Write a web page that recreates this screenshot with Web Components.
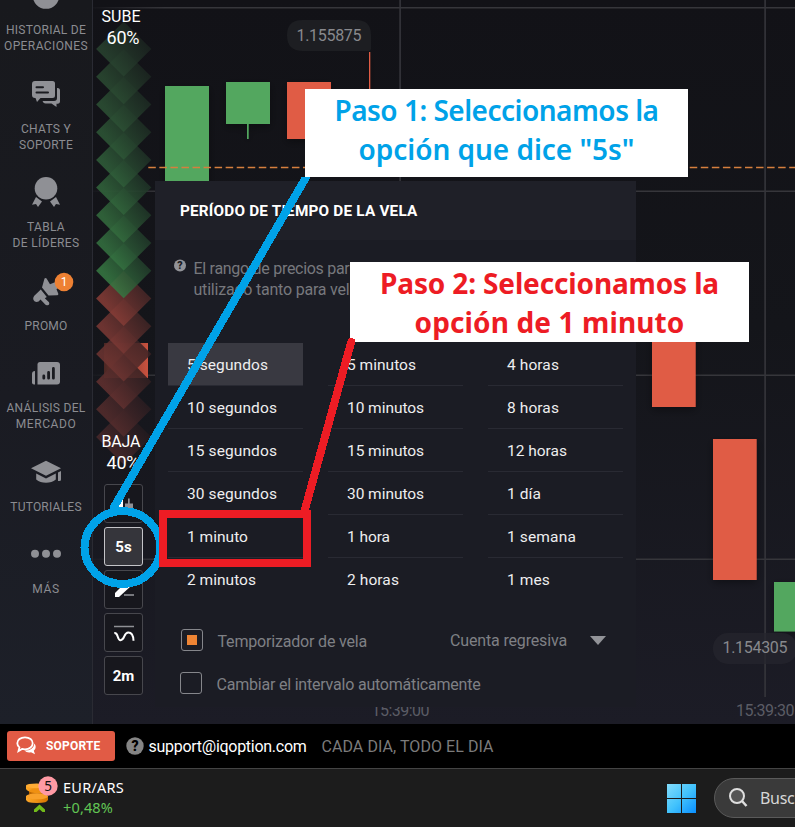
<!DOCTYPE html>
<html lang="es">
<head>
<meta charset="utf-8">
<title>Período de tiempo de la vela</title>
<style>
html,body{margin:0;padding:0}
body{width:795px;height:827px;overflow:hidden;background:#000;font-family:Roboto,"Liberation Sans",sans-serif}
</style>
</head>
<body>
<trade-app></trade-app>
<script>
function define(name, html, setup){
  customElements.define(name, class extends HTMLElement{
    connectedCallback(){
      if(this.shadowRoot) return;
      const t=document.createElement('template');
      t.innerHTML=html;
      this.attachShadow({mode:'open'}).append(t.content.cloneNode(true));
      if(setup) setup.call(this,this.shadowRoot);
    }
  });
}

/* Single-line text whose letter spacing is set so that it spans the width "w". */
define('fit-text', `<style>:host{display:inline-block;white-space:pre}</style><slot></slot>`, function(){
  const w=+this.getAttribute('w');
  if(!w) return;
  const n=this.textContent.length, nat=this.getBoundingClientRect().width;
  if(nat) this.style.letterSpacing=((w-nat)/n).toFixed(3)+'px';
});

define('side-item', `<style>
:host{display:flex;flex-direction:column;align-items:center;font-size:12px;line-height:16px;color:#8b8c91;text-align:center;flex:none}
::slotted(svg){display:block;width:46px;height:46px;overflow:visible}
::slotted(fit-text){height:16px}
</style><slot></slot>`);

define('side-bar', `<style>
:host{display:block;width:92px;border-right:1px solid #2a2b33;overflow:hidden;background:linear-gradient(#18191d,#1a1b22 55%,#1d2029)}
nav{display:flex;flex-direction:column;gap:20.5px;margin-top:-24px}
svg{fill:#8f9095}
</style>
<nav>
<side-item><svg viewBox="23 -24 46 46"><circle cx="46" cy="-4.5" r="13.3"/></svg><fit-text w="80">HISTORIAL DE</fit-text><fit-text w="84">OPERACIONES</fit-text></side-item>
<side-item><svg viewBox="23 75 46 46"><path d="M35 81h17.500q2.500 0 2.500 2.500v12q0 2.500-2.500 2.500H40.500L37 102l-1.500-4H35q-3 0-3-3V84q0-3 3-3z"/><path d="M36.500 87.300h6.500M36.500 92.600h11.500" stroke="#1a1b20" stroke-width="2" stroke-linecap="round" fill="none"/><path d="M57 88h.5q2.500 0 2.500 2.500v11q0 2-2 2.200h-1.500V107l-5-3.500h-6q-2 0-3-2.500h11.500q3 0 3-3z"/></svg><fit-text w="50">CHATS Y</fit-text><fit-text w="54">SOPORTE</fit-text></side-item>
<side-item><svg viewBox="23 173 46 46"><circle cx="46" cy="188.300" r="11.300"/><path d="M36 197l6 4.500-4 5.500-2-3-4 .8zM56 197l-6 4.500 4 5.500 2-3 4 .8z"/></svg><fit-text w="38">TABLA</fit-text><fit-text w="67">DE LÍDERES</fit-text></side-item>
<side-item><svg viewBox="23 272 46 46"><path d="M44.500 278.500q1.500-1.500 2.500.8l3 5 5.500-2.300 2 6-1 1.200 1.800 4.500q.3 1.500-1.300 1.500l-8.500.3-6.500-8z"/><path d="M40.800 289.500l6 7.500-2 1.200 4.200 4q1 2.500-1.500 3-1.500.3-2.500-1l-4.500-4.800q-3 4-6 1.800-2.500-2.500-.2-5.500z"/><circle cx="64" cy="282" r="9.300" fill="#ee8133"/><text x="64" y="286.300" font-size="12" fill="#fff" text-anchor="middle">1</text></svg><fit-text w="43">PROMO</fit-text></side-item>
<side-item><svg viewBox="23 354 46 46"><path d="M40 362h17q3 0 3 3v16.500q0 3-3 3H37.500V364.500q0-2.500 2.500-2.500z"/><path d="M35 371v13.500h-1q-2 0-2-2V374q0-3 3-3z"/><path d="M43.800 376v2.200M48.600 372.500v5.700M53.400 368.500v9.700" stroke="#1a1b20" stroke-width="2.800" stroke-linecap="round"/></svg><fit-text w="79">ANÁLISIS DEL</fit-text><fit-text w="60.500">MERCADO</fit-text></side-item>
<side-item><svg viewBox="23 453 46 46"><path d="M46 460.800L61 468.300 46 475.800 31 468.300z"/><path d="M36.200 473.500L46 478.500l9.800-5v6q-4 3.200-9.800 3.200t-9.800-3.200zM58 472.500l3-1.500v8.500q0 1.500-1.500 1.500H58z"/></svg><fit-text w="71.500">TUTORIALES</fit-text></side-item>
<side-item><svg viewBox="23 535 46 46"><circle cx="35" cy="553.800" r="4"/><circle cx="46" cy="553.800" r="4"/><circle cx="57" cy="553.800" r="4"/></svg><fit-text w="27.500">MÁS</fit-text></side-item>
</nav>`);

/* Candle chart: the viewBox keeps window coordinates. */
define('candle-chart', `<style>
:host{display:block;width:702px;height:724px}
svg{display:block}
</style>
<svg width="702" height="724" viewBox="93 0 702 724">
<defs><linearGradient id="bg" x2="0" y2="1"><stop offset="0" stop-color="#121217"/><stop offset=".45" stop-color="#14151a"/><stop offset="1" stop-color="#1c1c26"/></linearGradient>
<linearGradient id="fd" gradientUnits="userSpaceOnUse" x1="93" x2="165" y1="0" y2="0"><stop offset="0" stop-color="#36363b" stop-opacity=".1"/><stop offset="1" stop-color="#36363b"/></linearGradient>
<linearGradient id="rc"><stop offset="0" stop-color="#4a2724"/><stop offset="1" stop-color="#c9523f"/></linearGradient>
<filter id="sh" x="-30%" y="-10%" width="160%" height="125%"><feDropShadow dx="0" dy="3" stdDeviation="4" flood-color="#000" flood-opacity=".35"/></filter></defs>
<rect x="93" width="702" height="724" fill="url(#bg)"/>
<g fill="url(#fd)"><rect x="93" y="7" width="72" height="1.500"/><rect x="93" y="190.500" width="72" height="1.500"/><rect x="93" y="374.500" width="72" height="1.500"/><rect x="93" y="558.500" width="72" height="1.500"/></g>
<g fill="#36363b"><rect x="165" y="7" width="630" height="1.500"/><rect x="165" y="190.500" width="630" height="1.500"/><rect x="165" y="374.500" width="630" height="1.500"/><rect x="165" y="558.500" width="630" height="1.500"/>
<rect x="399.300" y="0" width="1.600" height="697"/><rect x="764.300" y="0" width="1.600" height="697"/></g>
<g filter="url(#sh)"><g fill="#52a75e"><rect x="165" y="86" width="44" height="120"/><rect x="226" y="82" width="44" height="42"/><rect x="247" y="124" width="1.700" height="15"/><rect x="774" y="582" width="44" height="49.500"/></g>
<g fill="#e05b44"><rect x="287" y="82" width="44" height="57"/><rect x="369" y="52" width="1.300" height="60"/><rect x="652" y="300" width="43.700" height="107"/><rect x="713" y="439" width="43.700" height="141"/></g></g>
<rect x="104" y="343" width="44" height="35" fill="url(#rc)"/>
<path d="M148.300 167.400H795" fill="none" stroke="#d67f3e" stroke-width="1.500" stroke-dasharray="7.500 3.550"/>
<path d="M302 20h54q15 0 15 15v14q0 2-2 2h-66q-16 0-16-15.500t15-15.500z" fill="#1d1e22"/>
<rect x="713" y="633" width="84" height="31" rx="15" fill="#26262d" fill-opacity=".75"/>
<g fill="#88898d" font-size="16"><text x="296.500" y="40.500" textLength="65">1.155875</text><text x="722.500" y="653" textLength="65">1.154305</text></g>
<g fill="#5b5c65" font-size="16"><text x="371.500" y="715.500" textLength="58">15:39:00</text><text x="736" y="715.500" textLength="58.500">15:39:30</text></g>
</svg>`);

define('sentiment-meter', `<style>
:host{display:block;width:62px;height:475px}
svg{display:block}
</style>
<svg width="62" height="475" viewBox="93 0 62 475">
<defs></defs>
<g id="d"></g>
<g fill="#fff"><text x="101.500" y="22" font-size="16" textLength="39">SUBE</text><text x="106.500" y="44" font-size="18" textLength="33">60%</text>
<text x="101.500" y="447" font-size="16" textLength="39">BAJA</text><text x="106.500" y="469" font-size="18" textLength="33">40%</text></g>
</svg>`, function(root){
  const shapes=[], grads=[];
  const mix=(a,b,t)=>'rgb('+a.map((v,k)=>Math.round(v+(b[k]-v)*t))+')';
  /* Each diamond runs from a lit lower left to a dim upper right; strength peaks where the colours meet. */
  for(let i=14;i>=0;i--){
    const red=i>8, t=red?(14-i)/5:i/8, y=49+27.72*i;
    const lit=red?mix([72,40,42],[134,60,54],t):mix([40,66,47],[54,120,66],t);
    const dim=red?mix([36,27,31],[72,39,39],t):mix([27,36,32],[34,62,43],t);
    grads.push(`<linearGradient id="s${i}" x1=".3" y1=".75" x2=".85" y2=".35"><stop offset="0" stop-color="${lit}"/><stop offset="1" stop-color="${dim}"/></linearGradient>`);
    shapes.push(`<path d="M123.700 ${y-27.500}L151.300 ${y}L123.700 ${y+27.500}L96.100 ${y}z" fill="url(#s${i})" opacity=".86"/>`);
  }
  root.querySelector('defs').innerHTML=grads.join('');
  root.getElementById('d').innerHTML=shapes.join('');
});

define('tool-button', `<style>
:host{display:flex;align-items:center;justify-content:center;box-sizing:border-box;width:39px;height:39px;border:1px solid #47474d;border-radius:3px;color:#fff;font-weight:700;font-size:15px;background:#17171d}
:host([active]){background:#35353b;border-color:#c4c4c8}
::slotted(svg){display:block;width:37px;height:37px}
</style><slot></slot>`);

define('tool-column', `<style>:host{display:flex;flex-direction:column;gap:4px}</style>
<tool-button><svg viewBox="105 485 37 37"><path d="M118 496h5v14h-5z" fill="#fff"/><path d="M125 503.500h3v-5h1.700v5h3.300v9h-8z" fill="#8f9095"/></svg></tool-button>
<tool-button active><fit-text w="16.500">5s</fit-text></tool-button>
<tool-button><svg viewBox="105 571 37 37"><path d="M115 597v-4l11-11 5 4-12 11z" fill="#fff"/><path d="M124 595h10" stroke="#77787d" stroke-width="2"/></svg></tool-button>
<tool-button><svg viewBox="105 614 37 37"><path d="M114 626.500h20" stroke="#8f9095" stroke-width="1.500"/><path d="M114.300 633c4.500-.5 2.500 7 6.200 7.200 4.500.2 3-7.700 7.800-7.700 4 0 5 3 5.200 8.200" stroke="#fff" stroke-width="2" fill="none"/></svg></tool-button>
<tool-button><fit-text w="21.500">2m</fit-text></tool-button>`);

define('time-option', `<style>
:host{display:flex;align-items:center;box-sizing:border-box;height:43px;padding:2px 0 0 19px;border-bottom:1px solid #292a33;font-size:15.500px;color:#eeeeef}
:host([selected]){background:#393941}
:host([last]){border-color:transparent}
</style><slot></slot>`);

define('check-row', `<style>
:host{display:flex;align-items:center;gap:14.500px;color:#7f8085;font-size:16px;height:22px;line-height:22px}
i{box-sizing:border-box;width:22px;height:22px;border:1.500px solid #85868b;border-radius:3px;display:grid;place-items:center}
:host([checked]) i::after{content:"";width:10px;height:10px;background:#ee8434}
.t{padding-top:3px}
</style><i></i><span class="t"><slot></slot></span><slot name="end"></slot>`);

define('period-panel', `<style>
:host{display:block;box-sizing:border-box;width:481px;height:526px;background:#1b1c24}
header{height:59px;box-sizing:border-box;padding:19px 0 0 25px;background:#1f2028;color:#fff;font-weight:700;font-size:15.300px;line-height:22px}
.info{display:flex;gap:7.500px;padding:18px 0 0 19px;height:85px;color:#77787d;font-size:16px;line-height:21px}
.info svg{margin-top:1px;flex:none}
.info div{display:flex;flex-direction:column;align-items:flex-start;width:200px}
.grid{display:grid;grid-template-columns:135px 135px 135px;column-gap:25px;padding-left:13px}
.opts{display:flex;flex-direction:column;gap:21px;padding:28px 30px 0 25px}
.opts check-row:first-child{padding-left:1px}
.sel{margin-left:auto;display:flex;align-items:center;gap:23px;padding-top:1px}
</style>
<header><fit-text w="237.500">PERÍODO DE TIEMPO DE LA VELA</fit-text></header>
<div class="info"><svg width="12" height="14" viewBox="0 0 12 14"><circle cx="6" cy="6.500" r="6" fill="#929398"/><text x="6" y="10.300" font-size="10.500" font-weight="900" text-anchor="middle" fill="#1b1c24">?</text></svg>
<div><fit-text w="156">El rango de precios par</fit-text><fit-text w="156">utilizado tanto para vel</fit-text></div></div>
<div class="grid"></div>
<div class="opts">
<check-row checked><fit-text w="149.500">Temporizador de vela</fit-text><span slot="end" class="sel"><fit-text w="117">Cuenta regresiva</fit-text><svg width="16" height="10"><path d="M0 0h16L8 9z" fill="#929398"/></svg></span></check-row>
<check-row><fit-text w="264">Cambiar el intervalo automáticamente</fit-text></check-row>
</div>`, function(root){
  const rows=[['5 segundos',81,'5 minutos',69,'4 horas',52],['10 segundos',90,'10 minutos',77,'8 horas',52],['15 segundos',90,'15 minutos',77,'12 horas',60],['30 segundos',90,'30 minutos',77,'1 día',34],['1 minuto',61,'1 hora',43,'1 semana',69],['2 minutos',69,'2 horas',52,'1 mes',43]];
  root.querySelector('.grid').innerHTML=rows.map((r,i)=>[0,2,4].map(k=>`<time-option${i===0&&k===0?' selected':''}${i===5?' last':''}><fit-text w="${r[k+1]}">${r[k]}</fit-text></time-option>`).join('')).join('');
});

define('step-note', `<style>
:host{display:flex;flex-direction:column;align-items:center;box-sizing:border-box;background:#fff;font-family:"Noto Sans","Open Sans",sans-serif;font-size:28px;line-height:38.500px;font-weight:600}
::slotted(fit-text){height:38.500px}
</style><slot></slot>`);

define('support-bar', `<style>
:host{display:flex;align-items:center;box-sizing:border-box;height:44px;padding-left:7px;background:#000;color:#fff;font-size:16px}
.btn{display:flex;align-items:center;box-sizing:border-box;width:108px;height:30px;border-radius:3px;background:#e15b45;padding-left:9px;gap:9px;font-weight:700;font-size:12px}
.q{margin:0 5px 0 10.500px}
.hours{color:#7b7b7b;margin-left:15px}
</style>
<span class="btn"><svg width="21" height="20" viewBox="0 0 21 20"><path d="M9 1.300c4.600 0 7.700 2.600 7.700 6s-3.100 6-7.700 6q-1.800 0-3-.4L2.500 15l.9-3.600C2 10.300 1.300 9 1.300 7.300c0-3.400 3.200-6 7.700-6z" fill="none" stroke="#fff" stroke-width="1.800"/><path d="M18.500 7.500q2.700 4.200-.7 7.300l1.200 3.400-4-1.900q-4.300.8-6.500-1.700 8.800 0 10-7.100z" fill="#fff"/></svg><fit-text w="54.500">SOPORTE</fit-text></span>
<svg class="q" width="18" height="18"><circle cx="9" cy="9" r="8.700" fill="#858585"/><text x="9" y="14" font-size="14" font-weight="900" text-anchor="middle" fill="#000">?</text></svg>
<fit-text w="158">support@iqoption.com</fit-text><fit-text class="hours" w="172">CADA DIA, TODO EL DIA</fit-text>`);

define('task-bar', `<style>
:host{display:flex;box-sizing:border-box;height:59px;border-top:1px solid #444;background:#1c1c1c;font-family:"Noto Sans","Open Sans",sans-serif;overflow:hidden}
.coin{margin:5px 3px 0 24px;flex:none}
.quote{display:flex;flex-direction:column;width:604px;font-size:14.500px;line-height:20px;padding-top:8px;color:#fff;flex:none;align-items:flex-start}
.up{color:#62c554}
.win{margin-top:15px;flex:none}
.search{display:flex;align-items:center;box-sizing:border-box;margin:9px 0 0 18px;width:220px;height:40px;border:1px solid #5a5a5a;border-radius:20px;background:#3a3a3a;color:#d6d6d6;font-size:16px;padding-left:13px;gap:10px;flex:none}
</style>
<svg class="coin" width="36" height="44" viewBox="24 774 36 44">
<defs><linearGradient id="c"><stop offset="0" stop-color="#ffa928"/><stop offset="1" stop-color="#d87500"/></linearGradient></defs>
<g fill="url(#c)"><path d="M26 796v3.500q0 3.500 11 3.500t11-3.500V796z"/><path d="M29 790.500v3q0 3 9 3t9-3v-3z" fill="#b96500"/><path d="M26 785.500v3q0 3.500 10.500 3.500T47 788.500v-3z"/></g>
<ellipse cx="37" cy="796.300" rx="11" ry="3" fill="#f9a12a"/><ellipse cx="38" cy="790.800" rx="9" ry="2.300" fill="#ef9011"/><ellipse cx="36.500" cy="785.800" rx="10.500" ry="2.400" fill="#ffac35"/>
<path d="M39.500 804.500l5.500 5v2.500h-2.500l-3-2.800-3 2.800H34v-2.500z" fill="#72bb1b"/>
<circle cx="48" cy="786" r="9.700" fill="#ff9aa4"/><text x="48" y="791" font-size="13.500" text-anchor="middle" fill="#111">5</text></svg>
<div class="quote"><fit-text w="61">EUR/ARS</fit-text><fit-text class="up" w="50">+0,48%</fit-text></div>
<svg class="win" width="29" height="29"><defs><linearGradient id="w" gradientUnits="userSpaceOnUse" x1="0" y1="0" x2="29" y2="29"><stop offset="0" stop-color="#83dcfb"/><stop offset=".5" stop-color="#43c3fc"/><stop offset="1" stop-color="#098fff"/></linearGradient></defs><path d="M0 0h14v14H0zM15 0h14v14H15zM0 15h14v14H0zM15 15h14v14H15z" fill="url(#w)"/></svg>
<div class="search"><svg width="22" height="22" fill="none" stroke="#dedede"><circle cx="9" cy="9" r="7" stroke-width="2" fill="#555"/><path d="M14 14l4.500 5" stroke-width="2.500"/></svg><fit-text w="34.500">Busc</fit-text></div>`);

define('trade-app', `<style>
:host{display:grid;position:relative;grid-template:724px 44px 59px / 795px;width:795px;height:827px;overflow:hidden}
main{display:grid;grid-template-columns:93px 702px;position:relative}
sentiment-meter{position:absolute;left:93px;top:0}
tool-column{position:absolute;left:104px;top:484px}
period-panel{position:absolute;left:155px;top:181px}
step-note{position:absolute}
.one{left:305px;top:89px;width:383px;height:88px;color:#00a2e8;padding-top:2px}
.two{left:350px;top:262px;width:399px;height:80px;color:#ed1c24;font-weight:700;padding-top:2px}
.marks{position:absolute;left:0;top:0;pointer-events:none}
</style>
<main><side-bar></side-bar><candle-chart></candle-chart>
<sentiment-meter></sentiment-meter><tool-column></tool-column><period-panel></period-panel></main>
<support-bar></support-bar><task-bar></task-bar>
<step-note class="one"><fit-text w="324">Paso 1: Seleccionamos la</fit-text><fit-text w="276">opción que dice "5s"</fit-text></step-note>
<step-note class="two"><fit-text w="339">Paso 2: Seleccionamos la</fit-text><fit-text w="270">opción de 1 minuto</fit-text></step-note>
<svg class="marks" width="795" height="724" fill="none" stroke-width="8" stroke-linecap="round" shape-rendering="crispEdges">
<clipPath id="k"><path d="M0 177h400v400H0z"/></clipPath>
<g stroke="#00a2e8"><path clip-path="url(#k)" d="M306.500 176.500L114 507"/><ellipse cx="122.500" cy="547.500" rx="38" ry="36.500"/></g>
<g stroke="#ed1c24"><path d="M351.200 342L304.500 511"/><rect x="163" y="514" width="144" height="49" stroke-linejoin="miter"/></g></svg>`);
</script>
</body>
</html>
